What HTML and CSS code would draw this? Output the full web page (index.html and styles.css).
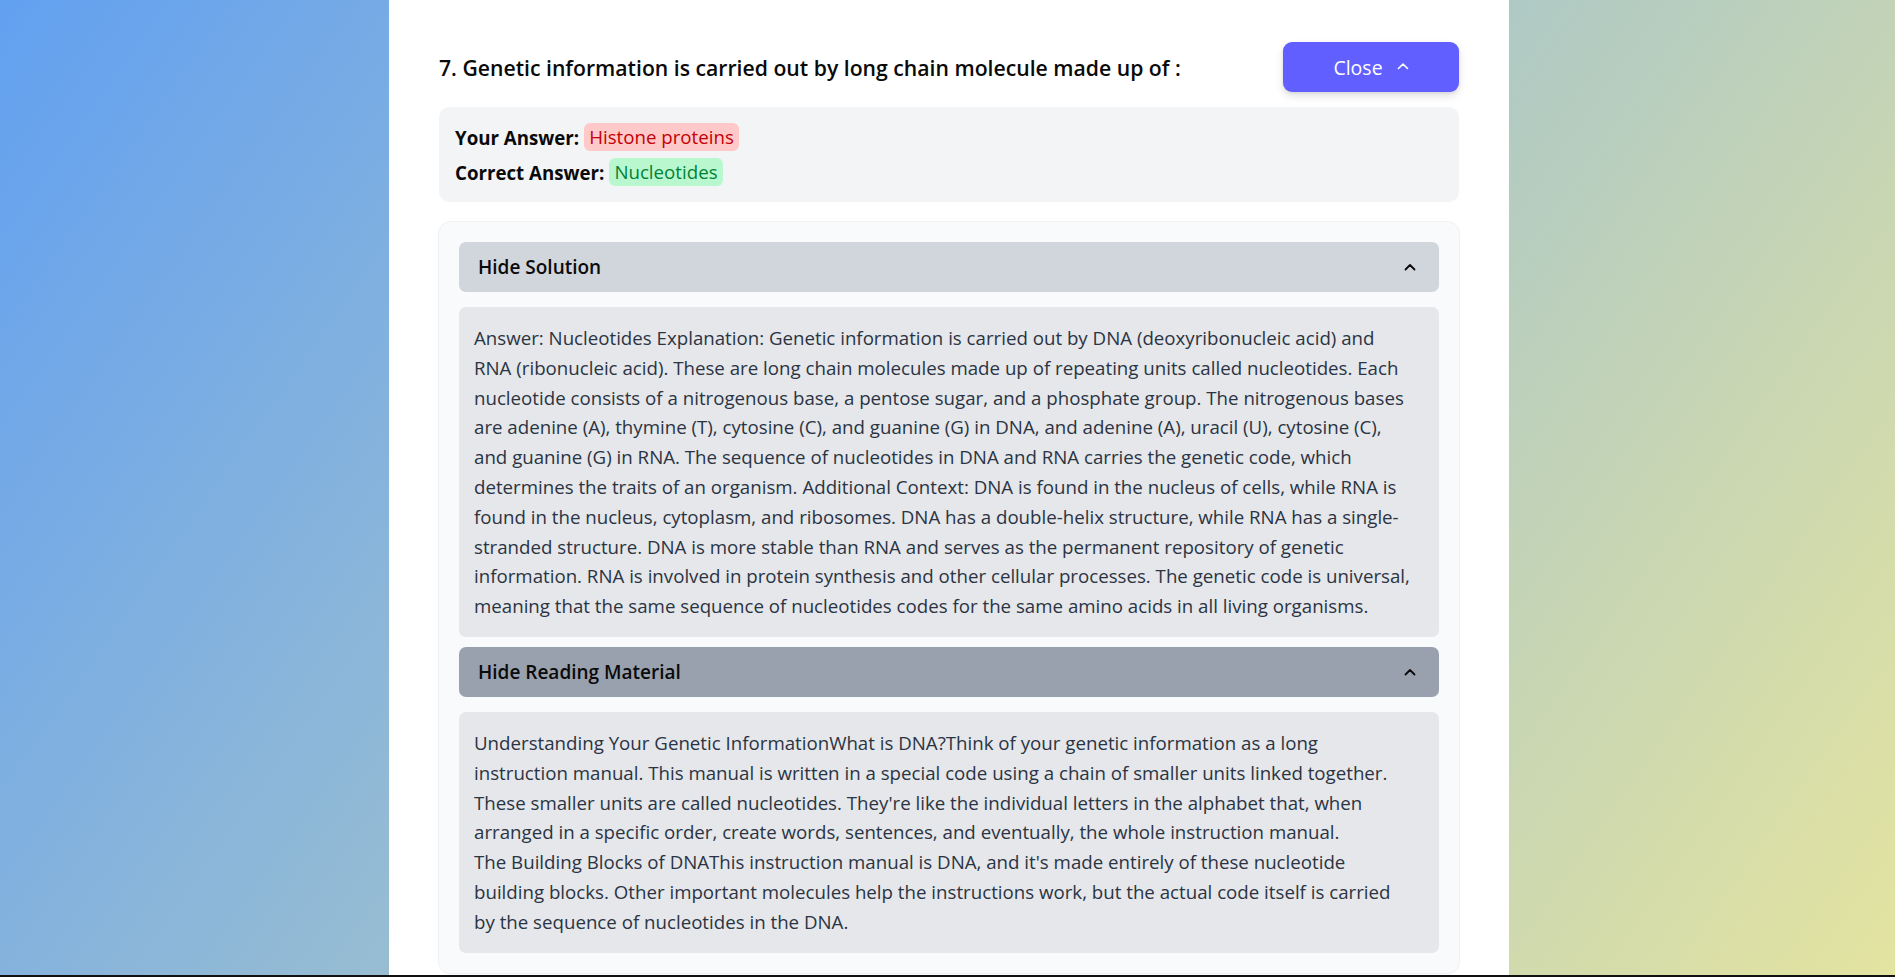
FILE: index.html
```html
<!DOCTYPE html>
<html lang="en">
<head>
<meta charset="utf-8">
<title>Question review</title>
<link rel="stylesheet" href="styles.css">
</head>
<body>
<main class="panel">
  <div class="header">
    <h2 class="title">7. Genetic information is carried out by long chain molecule made up of :</h2>
    <button class="close-btn" type="button">Close
      <svg class="chev" width="12" height="8" viewBox="0 0 12 8"><polyline points="1.5,6.5 6,2 10.5,6.5" fill="none" stroke="currentColor" stroke-width="1.6" stroke-linecap="round" stroke-linejoin="round"/></svg>
    </button>
  </div>

  <div class="answers">
    <div class="answer-row"><span class="label">Your Answer:</span><span class="badge badge-wrong">Histone proteins</span></div>
    <div class="answer-row"><span class="label">Correct Answer:</span><span class="badge badge-right">Nucleotides</span></div>
  </div>

  <section class="card">
    <button class="bar bar-solution" type="button"><span>Hide Solution</span>
      <svg width="12" height="8" viewBox="0 0 12 8"><polyline points="1.5,6.5 6,2 10.5,6.5" fill="none" stroke="currentColor" stroke-width="1.8" stroke-linecap="round" stroke-linejoin="round"/></svg>
    </button>
    <div class="content">Answer: Nucleotides Explanation: Genetic information is carried out by DNA (deoxyribonucleic acid) and RNA (ribonucleic acid). These are long chain molecules made up of repeating units called nucleotides. Each nucleotide consists of a nitrogenous base, a pentose sugar, and a phosphate group. The nitrogenous bases are adenine (A), thymine (T), cytosine (C), and guanine (G) in DNA, and adenine (A), uracil (U), cytosine (C), and guanine (G) in RNA. The sequence of nucleotides in DNA and RNA carries the genetic code, which determines the traits of an organism. Additional Context: DNA is found in the nucleus of cells, while RNA is found in the nucleus, cytoplasm, and ribosomes. DNA has a double-helix structure, while RNA has a single-stranded structure. DNA is more stable than RNA and serves as the permanent repository of genetic information. RNA is involved in protein synthesis and other cellular processes. The genetic code is universal, meaning that the same sequence of nucleotides codes for the same amino acids in all living organisms.</div>

    <button class="bar bar-reading" type="button"><span>Hide Reading Material</span>
      <svg width="12" height="8" viewBox="0 0 12 8"><polyline points="1.5,6.5 6,2 10.5,6.5" fill="none" stroke="currentColor" stroke-width="1.8" stroke-linecap="round" stroke-linejoin="round"/></svg>
    </button>
    <div class="content">Understanding Your Genetic InformationWhat is DNA?Think of your genetic information as a long instruction manual. This manual is written in a special code using a chain of smaller units linked together. These smaller units are called nucleotides. They're like the individual letters in the alphabet that, when arranged in a specific order, create words, sentences, and eventually, the whole instruction manual.<br>The Building Blocks of DNAThis instruction manual is DNA, and it's made entirely of these nucleotide building blocks. Other important molecules help the instructions work, but the actual code itself is carried by the sequence of nucleotides in the DNA.</div>
  </section>
</main>
<div class="screen-edge"></div>
</body>
</html>
```

FILE: styles.css
```css
* { box-sizing: border-box; }

html, body {
  margin: 0;
  height: 100%;
}

body {
  overflow: hidden;
  padding-left: 3px;
  font-family: "Open Sans", "Noto Sans", sans-serif;
  color: #111;
  background: linear-gradient(125deg, #62a0f0 0%, #a3c3cc 50%, #e4e4a0 100%);
}

.panel {
  width: 1120px;
  min-height: 100vh;
  margin: 0 auto;
  padding: 42px 50px 0;
  background: #ffffff;
}

.header {
  display: flex;
  align-items: center;
  justify-content: space-between;
  height: 50px;
}

.title {
  margin: 0;
  font-size: 21.2px;
  font-weight: 600;
  letter-spacing: 0;
  color: #0a0a0a;
}

.close-btn {
  display: flex;
  align-items: center;
  justify-content: center;
  gap: 14px;
  width: 176px;
  height: 50px;
  border: none;
  border-radius: 9px;
  background: #615fff;
  color: #fff;
  font-family: inherit;
  font-size: 19.5px;
  box-shadow: 0 4px 8px rgba(0, 0, 0, 0.12), 0 1px 3px rgba(0, 0, 0, 0.08);
}

.close-btn .chev { margin-top: -2px; }

.answers {
  margin-top: 15px;
  padding: 16px 16px;
  display: flex;
  flex-direction: column;
  gap: 7px;
  background: #f3f4f6;
  border-radius: 10px;
}

.answer-row {
  display: flex;
  align-items: center;
  height: 28px;
  font-size: 18.7px;
}

.label {
  font-weight: 700;
  color: #0a0a0a;
  margin-right: 5px;
}

.badge {
  padding: 0 5px;
  line-height: 28px;
  border-radius: 6px;
}

.badge-wrong { background: #ffc9c9; color: #c10007; }
.badge-right { background: #b9f8cf; color: #008236; }

.card {
  margin-top: 20px;
  padding: 20px;
  background: #f9fafb;
  border-radius: 12px;
  box-shadow: 0 0 0 1px #f1f2f4, 0 1px 3px rgba(0, 0, 0, 0.05);
}

.bar {
  display: flex;
  align-items: center;
  justify-content: space-between;
  width: 100%;
  height: 50px;
  padding: 0 23px 0 19px;
  border: none;
  border-radius: 7px;
  font-family: inherit;
  font-size: 19px;
  font-weight: 600;
  color: #0a0a0a;
  text-align: left;
}

.bar-solution { background: #d1d5dc; }
.bar-reading { background: #99a1af; margin-top: 10px; }

.content {
  margin-top: 15px;
  padding: 16px 27px 16px 15px;
  background: #e5e7eb;
  border-radius: 7px;
  font-size: 18.7px;
  line-height: 29.8px;
  color: #2b3443;
}

.screen-edge {
  position: fixed;
  left: 0;
  right: 0;
  bottom: 0;
  height: 2px;
  background: #111;
}
```
